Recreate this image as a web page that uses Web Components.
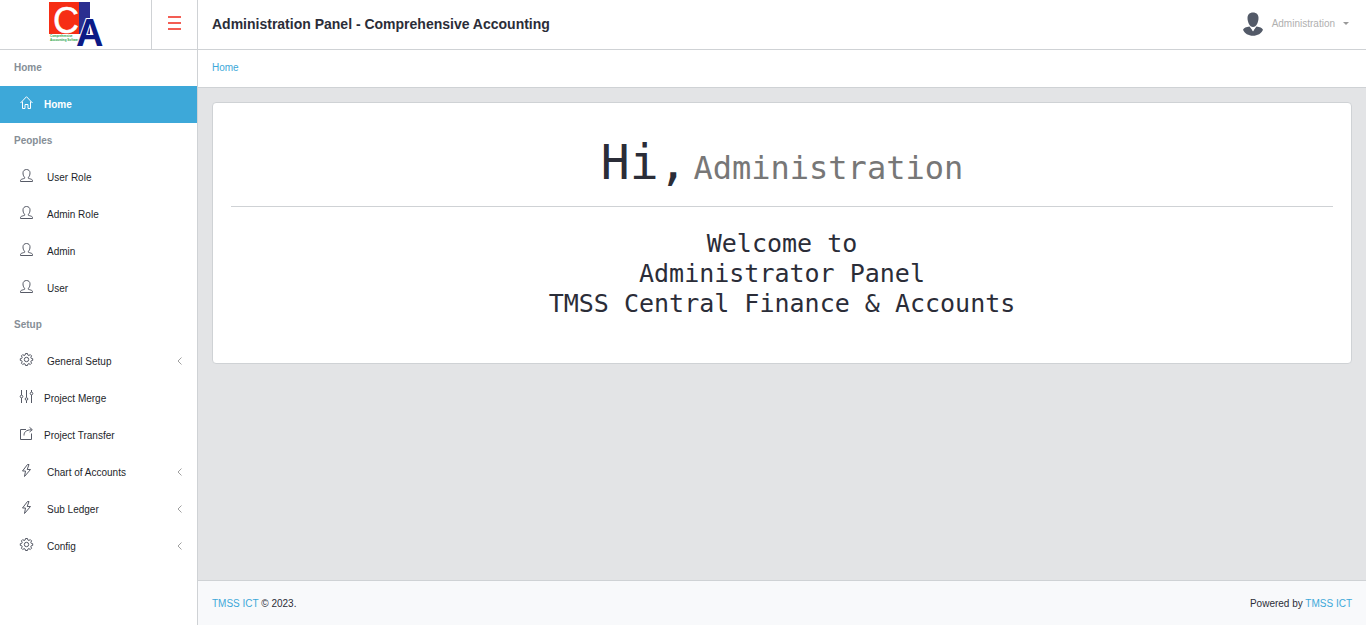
<!DOCTYPE html>
<html lang="en">
<head>
<meta charset="utf-8">
<meta name="viewport" content="width=device-width, initial-scale=1">
<title>Administration Panel - Comprehensive Accounting</title>
<style>
  :root {
    --line: #cfd2d5;
    --ink: #2b2d38;
    --link: #3da8d9;
    --muted: #868e96;
    --sidebar: 198px;
  }
  body { margin: 0; font: 10px/15px "Liberation Sans", Arial, sans-serif; color: var(--ink); }
</style>
</head>
<body>
<admin-shell>
  <brand-bar slot="brand"></brand-bar>
  <top-bar slot="top" user="Administration">Administration Panel - Comprehensive Accounting</top-bar>
  <side-nav slot="nav">
    <nav-section label="Home">
      <nav-item icon="home" active>Home</nav-item>
    </nav-section>
    <nav-section label="Peoples">
      <nav-item icon="user" wide>User Role</nav-item>
      <nav-item icon="user" wide>Admin Role</nav-item>
      <nav-item icon="user" wide>Admin</nav-item>
      <nav-item icon="user" wide>User</nav-item>
    </nav-section>
    <nav-section label="Setup">
      <nav-item icon="gear" wide expandable>General Setup</nav-item>
      <nav-item icon="sliders">Project Merge</nav-item>
      <nav-item icon="share">Project Transfer</nav-item>
      <nav-item icon="bolt" wide expandable>Chart of Accounts</nav-item>
      <nav-item icon="bolt" wide expandable>Sub Ledger</nav-item>
      <nav-item icon="gear" wide expandable>Config</nav-item>
    </nav-section>
  </side-nav>
  <crumb-bar slot="crumbs">Home</crumb-bar>
  <welcome-card>
    <span slot="name">Administration</span>
    Welcome to<br>Administrator Panel<br>TMSS Central Finance &amp; Accounts
  </welcome-card>
  <page-footer slot="footer"></page-footer>
</admin-shell>

<script>
const define = (name, render) => customElements.define(name, class extends HTMLElement {
  connectedCallback() {
    if (this.shadowRoot) return;
    const root = this.attachShadow({ mode: 'open' });
    root.innerHTML = '<style>*{box-sizing:border-box}a{color:inherit;text-decoration:none}</style>' + render(this);
  }
});

const icons = {
  home: '<path d="M.5 7 6.5.7 12.500 7M2.500 5.500v7h2.500v-4h3v4h2.500v-7"/>',
  user: '<path d="M4.600 8.300C3.300 7 3 5.500 3 3.800 3 1.800 4.500.5 6.500.5S10 1.800 10 3.800c0 1.700-.3 3.200-1.600 4.500v1c1.800.6 3.300.9 3.900 1.600.3.400.2 1.100.2 1.600H.5c0-.5-.1-1.200.2-1.600.6-.7 2.100-1 3.900-1.600z"/>',
  gear: '<circle cx="6.500" cy="6.500" r="2.200"/><path d="M5.500.5h2l.4 1.600 1 .4 1.400-.9 1.300 1.300-.8 1.400.4 1 1.500.4v1.700l-1.500.4-.4 1 .8 1.400-1.300 1.300-1.400-.9-1 .4-.4 1.500h-2l-.4-1.500-1-.4-1.400.9-1.300-1.300.8-1.400-.4-1L.3 7.400V5.700l1.500-.4.4-1-.8-1.400 1.300-1.300 1.400.9 1-.4z"/>',
  sliders: '<path d="M1.500 0v5M1.500 8v5M6.500 0v7.500M6.500 10.500V13M11.500 0v2M11.500 5v8"/><circle cx="1.500" cy="6.500" r="1.300"/><circle cx="6.500" cy="9" r="1.300"/><circle cx="11.500" cy="3.500" r="1.300"/>',
  share: '<path d="M6 2.500H.5v10h11V6.500M4 8.500c0-3.500 2-5.500 7.500-5.800M9.500.3 12.300 2.700 9.500 5"/>',
  bolt: '<path d="M7.500.5 2.500 7h3l-1 5.500L10.500 5.500h-3.300L9 .5z"/>'
};

define('admin-shell', () => `
  <style>
    :host { display: grid; min-height: 100vh; grid-template: 50px 1fr / var(--sidebar) minmax(0, 1fr); }
    .nav { border-right: 1px solid var(--line); background: #fff; }
    .page { display: flex; flex-direction: column; }
    main { flex: 1; padding: 14px; background: #e3e4e6; }
  </style>
  <slot name="brand"></slot>
  <slot name="top"></slot>
  <div class="nav"><slot name="nav"></slot></div>
  <div class="page"><slot name="crumbs"></slot><main><slot></slot></main><slot name="footer"></slot></div>`);

define('brand-bar', () => `
  <style>
    :host { display: flex; border-bottom: 1px solid var(--line); }
    a { flex: 1; display: flex; justify-content: center; }
    .logo { overflow: visible; }
    button { width: 47px; padding: 0 0 4px; border: solid var(--line); border-width: 0 1px; background: none; color: #f0281c; cursor: pointer; }
    button svg { display: block; margin: 0 auto; }
  </style>
  <a href="#" aria-label="Comprehensive Accounting Software">
    <svg class="logo" width="56" height="49" viewBox="0 0 56 49" font-family="Liberation Sans, Arial, sans-serif">
      <path d="M1 2h30v32H1z" fill="#f62d14"/><path d="M31 2h11v32H31z" fill="#2b2e90"/>
      <text x="5" y="33" font-size="36" fill="#fff" stroke="#fff" stroke-width=".5">C</text>
      <g font-size="3" font-weight="700" fill="#25a244"><text x="2" y="37">Comprehensive</text><text x="2" y="41">Accounting Software</text></g>
      <text x="28" y="46" font-size="38" font-weight="700" fill="#0c1a86" stroke="#fff" stroke-width="2" paint-order="stroke">A</text>
    </svg>
  </a>
  <button aria-label="Toggle menu"><svg width="13" height="14" stroke="currentColor" stroke-width="1.500"><path d="M0 1h13M0 7h13M0 13h13"/></svg></button>`);

define('top-bar', el => `
  <style>
    :host { display: flex; align-items: center; justify-content: space-between; padding: 0 17px 2px 14px; border-bottom: 1px solid var(--line); }
    h1 { margin: 0; font-size: 14px; line-height: 20px; }
    button { display: flex; align-items: center; padding: 0; border: 0; background: none; font: inherit; color: #b0b0b0; cursor: pointer; }
    .face { margin-right: 8px; }
    .caret { margin-left: 8px; }
  </style>
  <h1><slot></slot></h1>
  <button>
    <svg class="face" width="22" height="24" viewBox="0 0 22 24" fill="#535a68"><path d="M11 .5c3.500 0 5.500 2.200 5.500 5.500 0 4-2 9-5.500 9S5.500 10 5.500 6C5.500 2.700 7.500.5 11 .5z"/><path d="M7.500 14.500 11 19l3.500-4.500c3.500.6 5.500 1.300 6.500 3.200-1.500 3.800-5.500 6-10 6s-8.500-2.200-10-6c1-1.900 3-2.600 6.500-3.200z"/><path d="m9 15.500 2 4 2-4z" fill="#fff"/></svg>
    <span>${el.getAttribute('user')}</span>
    <svg class="caret" width="6" height="3" fill="#999"><path d="M0 0h6L3 3z"/></svg>
  </button>`);

define('side-nav', () => `<style>:host { display: block; }</style><nav><slot></slot></nav>`);

define('nav-section', el => `
  <style>
    :host { display: block; }
    h2 { display: flex; align-items: center; height: 36px; margin: 0; padding: 0 14px 2px; font-size: 10px; color: var(--muted); }
  </style>
  <h2>${el.getAttribute('label')}</h2><slot></slot>`);

define('nav-item', el => `
  <style>
    :host { display: block; color: #1d1f2b; --stroke: #565a66; }
    :host([active]) { background: var(--link); color: #fff; --stroke: #fff; font-weight: 700; }
    a { display: flex; align-items: center; height: 37px; padding: 0 15px 1px 20px; gap: 11px; }
    :host([wide]) a { gap: 14px; }
    .icon { margin-bottom: 4px; stroke: var(--stroke); overflow: visible; }
    .label { flex: 1; }
  </style>
  <a href="#">
    <svg class="icon" width="13" height="13" viewBox="0 0 13 13" fill="none">${icons[el.getAttribute('icon')]}</svg>
    <span class="label"><slot></slot></span>
    ${el.hasAttribute('expandable') ? '<svg width="5" height="8" fill="none" stroke="#a0a0a0"><path d="M4.500.5 1 4l3.500 3.500"/></svg>' : ''}
  </a>`);

define('crumb-bar', () => `
  <style>
    :host { display: block; padding: 10px 14px 12px; border-bottom: 1px solid var(--line); color: var(--link); }
  </style>
  <nav aria-label="Breadcrumb"><a href="#"><slot></slot></a></nav>`);

define('welcome-card', () => `
  <style>
    :host { display: block; padding: 29px 18px 44px; border: 1px solid var(--line); border-radius: 4px; background: #fff; text-align: center; font-family: "DejaVu Sans Mono", monospace; }
    h1 { display: flex; justify-content: center; align-items: baseline; gap: 6px; margin: 0; font-size: 48px; line-height: 60px; font-weight: 400; }
    small { font-size: 32px; color: #777; }
    hr { margin: 8px 0 22px; border: 0; border-top: 1px solid var(--line); }
    p { margin: 0; font-size: 25px; line-height: 30px; }
  </style>
  <h1><span>Hi,</span><small><slot name="name"></slot></small></h1>
  <hr>
  <p><slot></slot></p>`);

define('page-footer', () => `
  <style>
    :host { display: flex; justify-content: space-between; padding: 15px 14px 14px; border-top: 1px solid var(--line); background: #f8f9fb; }
    a { color: var(--link); }
  </style>
  <span><a href="#">TMSS ICT</a> © 2023.</span>
  <span>Powered by <a href="#">TMSS ICT</a></span>`);
</script>
</body>
</html>
